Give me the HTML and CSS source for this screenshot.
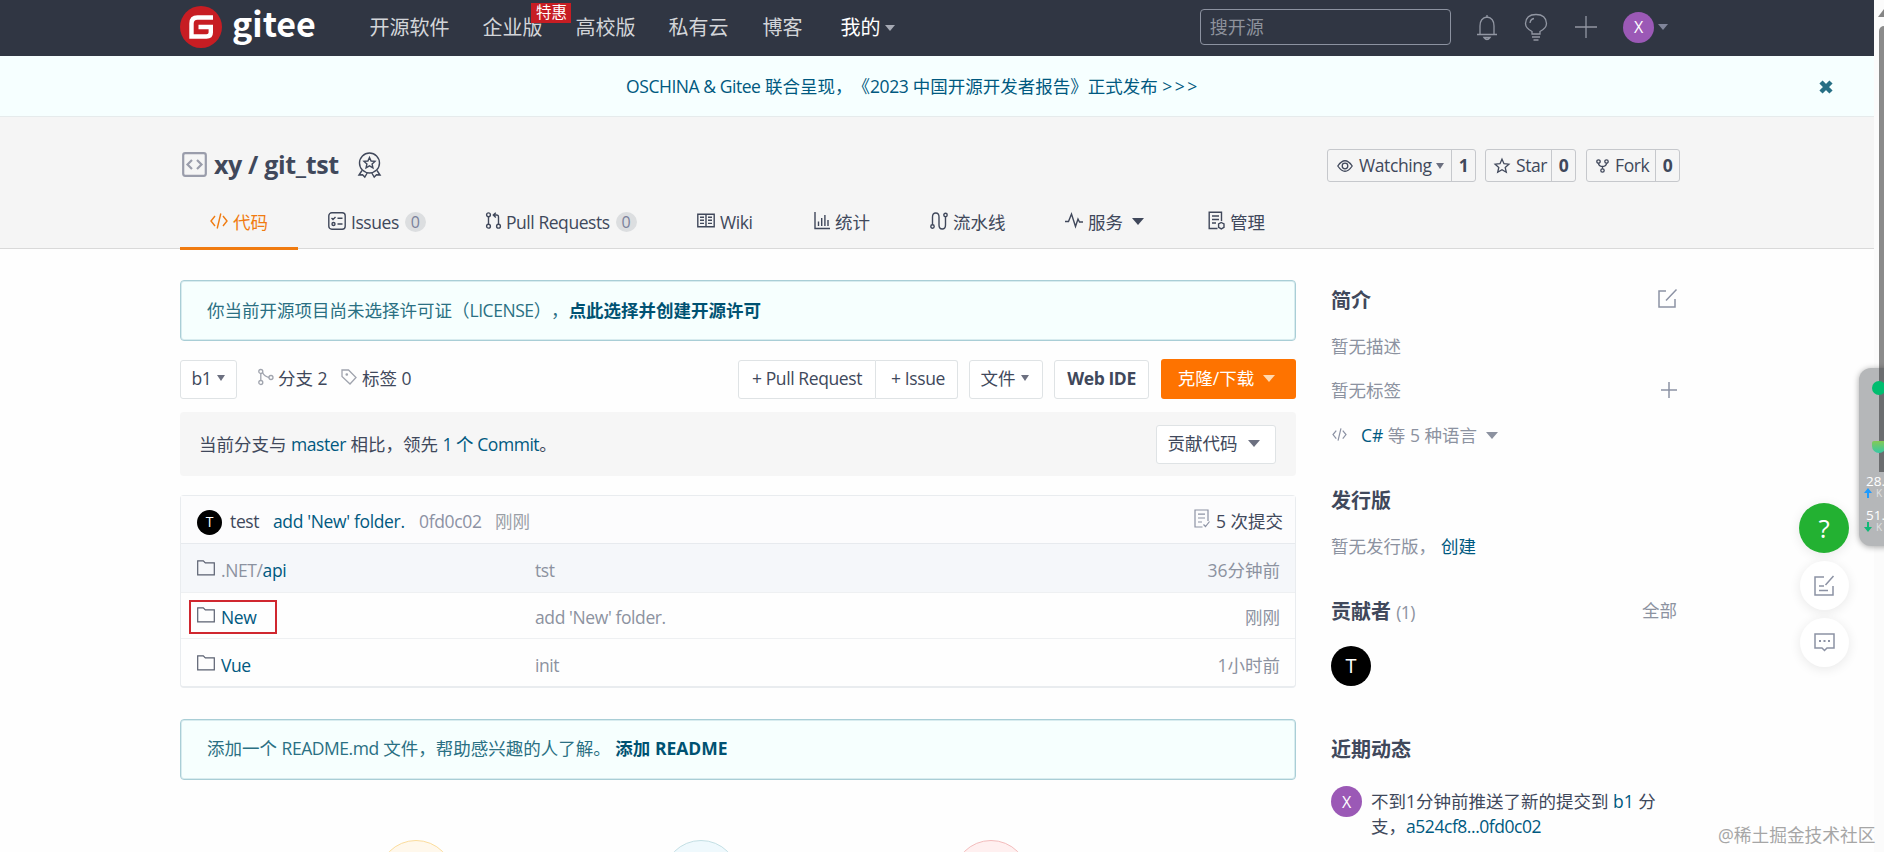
FILE: index.html
```html
<!DOCTYPE html>
<html lang="zh-CN">
<head>
<meta charset="utf-8">
<title>xy/git_tst</title>
<link rel="stylesheet" href="styles.css">
</head>
<body>
<svg class="defs" width="0" height="0">
  <symbol id="folder" viewBox="0 0 18 16"><path d="M.7 14.8V.8h5.6l2 2h9v12z"/></symbol>
  <symbol id="code" viewBox="0 0 18 16"><path d="M5 3L1 8l4 5M13 3L17 8l-4 5M10.800 .500L7.200 15.500"/></symbol>
</svg>
<div class="page">
  <header class="topbar">
    <a class="logo">
      <svg width="42" height="42" viewBox="0 0 42 42"><circle cx="21" cy="21" r="21" fill="#c71d23"/><path d="M33 11.500H17.500Q11.500 11.500 11.500 17.500V30.500H26.500Q30.800 30.500 30.800 26.500V21H18.500" fill="none" stroke="#fff" stroke-width="4.400"/></svg>
      <span class="logo-text">gitee</span>
    </a>
    <nav class="nav">
      <a class="n1">开源软件</a><a class="n2">企业版<b class="promo">特惠</b></a><a class="n3">高校版</a><a class="n4">私有云</a><a class="n5">博客</a><a class="n6">我的<i class="caret"></i></a>
    </nav>
    <div class="search">搜开源</div>
    <svg class="ic bell" width="22" height="27" viewBox="0 0 22 27"><path d="M1 20.500h20M4 20.500V12q0-8 7-9 7 1 7 9v8.500M11 3V1M8 23.500h6q-3 4-6 0z"/></svg>
    <svg class="ic bulb" width="24" height="28" viewBox="0 0 24 28"><path d="M8 21v-2.500Q1.500 15 1.500 10.500 2 1.500 12 1.500t10.500 9Q22.500 15 16 18.500V21zM8 24h8M9.500 27h5M6 10q.5-4 4-4.500"/></svg>
    <svg class="ic plus" width="22" height="22" viewBox="0 0 22 22"><path d="M0 11h22M11 0v22"/></svg>
    <span class="avatar me">X</span><i class="caret me-caret"></i>
  </header>

  <div class="banner">
    <a><span class="en">OSCHINA &amp; Gitee</span> 联合呈现，《<span class="en">2023</span> 中国开源开发者报告》正式发布 <span class="gt">&gt;&gt;&gt;</span></a>
    <svg class="close" width="14" height="14" viewBox="0 0 14 14"><path d="M2 2l10 10M12 2L2 12"/></svg>
  </div>

  <section class="project">
    <div class="title-row">
      <svg class="repo" width="25" height="25" viewBox="0 0 25 25"><rect x="1.200" y="1.200" width="22.600" height="22.600" rx="2"/><path d="M10 8l-4.500 4.500L10 17M15 8l4.500 4.500L15 17"/></svg>
      <h1>xy / git_tst</h1>
      <svg class="ln medal" width="23" height="26" viewBox="0 0 23 26"><circle cx="11.500" cy="11" r="10"/><path d="M11.500 5.500l1.600 3.500 3.900.4-2.900 2.600.8 3.800-3.400-2-3.400 2 .8-3.800L6 9.400l3.900-.4zM4 18.500l-3 4.500 3.500-.3L6.800 25l2.400-4M19 18.500l3 4.500-3.500-.3-2.300 2.300-2.400-4"/></svg>
      <div class="actions">
        <div class="act a1"><span><svg class="ln" width="16" height="14" viewBox="0 0 16 14"><path d="M.8 7Q8-3.500 15.200 7 8 17.500.8 7z"/><circle cx="8" cy="7" r="2.800"/></svg>Watching<i class="caret"></i></span><b>1</b></div>
        <div class="act a2"><span><svg class="ln" width="16" height="16" viewBox="0 0 16 16"><path d="M8 1.200l2 4.500 4.900.5-3.700 3.300 1.100 4.800L8 11.800l-4.300 2.500 1.100-4.800L1.100 6.200 6 5.700z"/></svg>Star</span><b>0</b></div>
        <div class="act a3"><span><svg class="ln" width="13" height="14" viewBox="0 0 13 14"><circle cx="2.500" cy="2.500" r="1.700"/><circle cx="10.500" cy="2.500" r="1.700"/><circle cx="6.500" cy="11.500" r="1.700"/><path d="M2.500 4.200q0 3 4 3.300 4-.3 4-3.300M6.500 7.500v2.300"/></svg>Fork</span><b>0</b></div>
      </div>
    </div>
    <nav class="tabs">
      <a class="t1"><svg width="18" height="16"><use href="#code"/></svg>代码</a>
      <a class="t2"><svg width="18" height="18" viewBox="0 0 18 18"><rect x=".8" y=".8" width="16.400" height="16.400" rx="3"/><path d="M3.500 6l1.500 1.500L7.500 5M9.500 6.200h5M9.500 12h5"/><circle cx="5.500" cy="12" r="1.500"/></svg><span class="en">Issues</span><b>0</b></a>
      <a class="t3"><svg width="15" height="17" viewBox="0 0 15 17"><circle cx="2.500" cy="2.800" r="1.900"/><circle cx="2.500" cy="14.200" r="1.900"/><circle cx="12.500" cy="14.200" r="1.900"/><path d="M2.500 4.700v7.600M12.500 12.300V5q0-2-2-2H7.500M9.800.800L7.300 3l2.500 2.400"/></svg><span class="en">Pull Requests</span><b>0</b></a>
      <a class="t4"><svg width="18" height="15" viewBox="0 0 18 15"><path d="M.8 1.200h16.400v12.600H.8zM9 1.200v12.600M3 4.200h4M3 7.300h4M3 10.400h4M11 4.200h4M11 7.300h4M11 10.400h4"/></svg><span class="en">Wiki</span></a>
      <a class="t5"><svg width="16" height="18" viewBox="0 0 16 18"><path d="M1 0v16.500h15M4.500 9.500V14M7.700 6v8M10.900 3v11M14 8v6"/></svg>统计</a>
      <a class="t6"><svg width="18" height="18" viewBox="0 0 18 18"><circle cx="2.500" cy="14.500" r="1.700"/><circle cx="15.500" cy="3" r="1.700"/><path d="M2.500 12.800V5q0-4 3.300-4 3.200 0 3.200 4v8q0 4 3.200 4 3.300 0 3.300-4V4.700"/></svg>流水线</a>
      <a class="t7"><svg width="18" height="15" viewBox="0 0 18 15"><path d="M0 8.500h3.500L6.500 1l4 12.500L13 6l1.500 3H18"/></svg>服务<i class="caret big"></i></a>
      <a class="t8"><svg width="17" height="19" viewBox="0 0 17 19"><path d="M9.500 17.500H1.200V1.200h12.300V10M4 5h7M4 8.500h7M4 12h4"/><path d="M13.300 11.500l2.700 1.500v3.400l-2.700 1.500-2.700-1.500V13z"/></svg>管理</a>
    </nav>
  </section>

  <div class="content">
    <main>
      <div class="alert">你当前开源项目尚未选择许可证（<span class="en">LICENSE</span>），<b>点此选择并创建开源许可</b></div>
      <div class="toolbar">
        <a class="btn b-branch"><span>b1</span><i class="caret"></i></a>
        <a class="stat s1"><svg width="16" height="16" viewBox="0 0 16 16"><circle cx="2.800" cy="2.500" r="2"/><circle cx="2.800" cy="13.500" r="2"/><circle cx="13" cy="8.500" r="2"/><path d="M2.800 4.500v7M4.500 3.500q2 4 6.500 5"/></svg>分支 2</a>
        <a class="stat s2"><svg width="16" height="16" viewBox="0 0 16 16"><path d="M1 1h6.500l7.500 7.500L9 15 1 7.500z"/><circle cx="5.800" cy="5.500" r=".7"/></svg>标签 0</a>
        <a class="btn b-pr"><span>+ Pull Request</span></a><a class="btn b-issue"><span>+ Issue</span></a>
        <a class="btn b-file">文件<i class="caret"></i></a>
        <a class="btn b-ide"><b>Web IDE</b></a>
        <a class="btn b-clone">克隆/下载<i class="caret big"></i></a>
      </div>
      <div class="compare">
        <span>当前分支与 <a class="en">master</a> 相比，领先 <a class="en">1 个 Commit</a>。</span>
        <a class="btn b-contrib">贡献代码<i class="caret big"></i></a>
      </div>
      <div class="files">
        <div class="commit"><span class="avatar t">T</span><span class="who">test</span><a class="msg">add 'New' folder.</a><span class="sha">0fd0c02</span><span class="now">刚刚</span>
          <span class="total"><svg width="16" height="19" viewBox="0 0 16 19"><path d="M8.500 18H1V1h13v11M4 5.200h7M4 9h7M4 13h4M9.500 15.500l2 2 4-5"/></svg>5 次提交</span></div>
        <div class="file hover"><svg width="18" height="16"><use href="#folder"/></svg><span class="name">.NET/<a>api</a></span><span class="desc">tst</span><span class="time">36分钟前</span></div>
        <div class="file r2"><svg width="18" height="16"><use href="#folder"/></svg><span class="name"><a>New</a></span><span class="desc">add 'New' folder.</span><span class="time">刚刚</span><i class="mark"></i></div>
        <div class="file r3"><svg width="18" height="16"><use href="#folder"/></svg><span class="name"><a>Vue</a></span><span class="desc">init</span><span class="time">1小时前</span></div>
      </div>
      <div class="alert readme">添加一个 <span class="en">README.md</span> 文件，帮助感兴趣的人了解。 <b>添加 <span class="en2">README</span></b></div>
      <div class="steps"><i class="c1"></i><i class="c2"></i><i class="c3"></i></div>
    </main>

    <aside>
      <div class="row h"><h2>简介</h2><svg class="ic" width="19" height="19" viewBox="0 0 19 19"><path d="M8 2H1v16h16v-8M18.500.5L8 11.500"/></svg></div>
      <div class="row d1">暂无描述</div>
      <div class="row d2">暂无标签<svg class="ic" width="16" height="16" viewBox="0 0 16 16"><path d="M0 8h16M8 0v16"/></svg></div>
      <div class="row d3"><svg class="ic cd" width="17" height="13" viewBox="0 1 18 14"><use href="#code"/></svg><span><a>C#</a> 等 5 种语言</span><i class="caret big"></i></div>
      <div class="row h rel"><h2>发行版</h2></div>
      <div class="row d4">暂无发行版， <a>创建</a></div>
      <div class="row h con"><h2>贡献者 <small>(1)</small></h2><span>全部</span></div>
      <span class="avatar big-t">T</span>
      <div class="row h act-h"><h2>近期动态</h2></div>
      <div class="event"><span class="avatar x">X</span><p>不到1分钟前推送了新的提交到 <a>b1</a> 分支，<a class="en">a524cf8...0fd0c02</a></p></div>
    </aside>
  </div>
</div>

<div class="scroll"><i class="up"></i><i class="thumb"></i></div>
<div class="floats">
  <span class="help">?</span>
  <span class="fb"><svg class="ic" width="21" height="21" viewBox="0 0 21 21"><path d="M10 2H1v18h18v-9M19.500 1l-8 9M5 11h5M5 15.500h9"/></svg></span>
  <span class="fb"><svg class="ic" width="21" height="19" viewBox="0 0 21 19"><path d="M1 1h19v14h-7l-2.500 2.500L8 15H1z"/><path class="dots" d="M5 8h2M9.500 8h2M14 8h2"/></svg></span>
</div>
<div class="meter">
  <i class="shade"></i><i class="g1"></i><i class="g2"></i>
  <div class="m1">28.</div><div class="k"><svg width="8" height="10" viewBox="0 0 8 10"><path d="M4 0l4 5H5v5H3V5H0z" fill="#1e9bff"/></svg>K</div>
  <div class="m1 m2">51.</div><div class="k"><svg width="8" height="10" viewBox="0 0 8 10"><path d="M4 10l4-5H5V0H3v5H0z" fill="#12b877"/></svg>K</div>
</div>
<div class="watermark">@稀土掘金技术社区</div>
</body>
</html>
```
FILE: styles.css
```css
* { box-sizing: border-box; }
body { margin: 0; width: 1884px; height: 852px; overflow: hidden; position: relative; background: #fefefe; color: #40485b;
  font: 17.5px/24px "Open Sans", "Noto Sans CJK SC", sans-serif; white-space: nowrap; text-spacing-trim: space-all; }
.defs { position: absolute; }
.defs symbol { overflow: visible; }
i { font-style: normal; }
svg { fill: none; stroke: currentColor; stroke-width: 1.4; flex: none; overflow: visible; }
.en { letter-spacing: -.45px; }
.page { width: 1874px; height: 852px; overflow: hidden; }
.ic { color: #8c92a4; stroke-width: 1.5; }
.caret { display: inline-block; flex: none; border: 4.5px solid transparent; border-top: 6px solid #6c7080; border-bottom: 0; }
.caret.big { border-width: 7px 6px 0; }
.avatar { display: flex; align-items: center; justify-content: center; border-radius: 50%; color: #fff; flex: none; }

.topbar { display: flex; align-items: center; height: 56px; background: #303643; padding: 0 206px 2px 180px; color: #d3d5d9; }
.logo { display: flex; align-items: center; width: 190px; color: #fff; }
.logo svg { stroke: none; }
.logo-text { font: bold 34px/50px "Noto Sans CJK SC", sans-serif; margin: -8px 0 0 10px; }
.nav { display: flex; font-size: 20px; width: 833px; padding-top: 2px; }
.nav a { position: relative; }
.n1 { width: 113px; } .n2 { width: 93px; } .n3 { width: 93px; } .n4 { width: 94px; } .n5 { width: 78px; }
.n6 { color: #fff; display: flex; align-items: center; gap: 5px; }
.nav .caret, .me-caret { border-width: 6px 5px 0; border-top-color: #a5a9b3; }
.promo { position: absolute; left: 49px; top: -13px; width: 40px; height: 20px; background: #c71d23; color: #fff; font-weight: 400; font-size: 15.5px; line-height: 19px; text-align: center; z-index: 2; }
.search { width: 252px; height: 36px; border: 1px solid #8c92a0; border-radius: 4px; padding-left: 9px; font-size: 18px; line-height: 35px; color: #8e929c; margin-right: 25px; }
.topbar > .ic { stroke-width: 1.3; color: #9297a3; }
.bulb { margin-left: 26px; }
.plus { margin-left: 27px; }
.me { width: 31px; height: 31px; background: #9b59b6; font-size: 16px; margin-left: 26px; }
.me-caret { margin-left: 4px; border-top-color: #80859a; }

.banner { position: relative; height: 61px; background: #f6ffff; border-bottom: 1px solid #e6ebec; color: #005980; text-align: center; line-height: 61px; padding-right: 48px; }
.banner .close { position: absolute; right: 41px; top: 24px; color: #266f85; stroke-width: 4.5; }
.gt { letter-spacing: 2.5px; }

.project { height: 132px; background: #f5f5f5; border-bottom: 1px solid #d9d9d9; padding: 32px 194px 0 180px; }
.title-row { display: flex; align-items: center; height: 33px; }
.repo { color: #9a9dab; stroke-width: 2.2; margin: -2px 0 0 2px; }
h1 { margin: -4px 0 0; font-size: 25px; line-height: 30px; width: 151px; padding-left: 7px; letter-spacing: -.35px; }
.medal { margin-top: -1px; }
.actions { display: flex; margin-left: auto; }
.act { display: flex; height: 33px; border: 1px solid #c6c8cc; border-radius: 3px; line-height: 31px; letter-spacing: -.4px; }
.act span { display: flex; align-items: center; gap: 6px; padding-left: 9px; flex: 1; }
.act b { width: 24px; text-align: center; border-left: 1px solid #c6c8cc; }
.act .caret { margin-left: -2px; }
.act svg { stroke-width: 1.3; }
.a1 { width: 149px; } .a2 { width: 91px; margin: 0 10px 0 9px; } .a3 { width: 94px; }
.a2 span { padding-left: 8px; }
.tabs { display: flex; margin-top: 14px; height: 54px; position: relative; }
.tabs a { display: flex; align-items: center; padding-left: 30px; padding-bottom: 3px; }
.tabs svg { margin-right: 5px; margin-top: -2px; }
.tabs b { width: 21px; height: 20px; line-height: 20px; border-radius: 50%; background: #dcdee0; color: #7a819b; font-weight: 400; font-size: 16px; text-align: center; margin-left: 6px; }
.tabs .t1 { width: 118px; color: #f07b10; border-bottom: 3px solid #f07b10; padding-bottom: 0; }
.t2 { width: 158px; } .t3 { width: 211px; } .t4 { width: 117px; } .t5 { width: 116px; } .t6 { width: 135px; } .t7 { width: 143px; }
.tabs .caret { margin-left: 9px; border-top-color: #40485b; }

.content { display: flex; gap: 35px; padding: 31px 194px 0 180px; height: 603px; overflow: hidden; }
main { width: 1116px; flex: none; }
.alert { height: 61px; border: 1px solid #a9ced6; border-radius: 4px; background: #f6fffe; color: #2a7083; padding-left: 26px; line-height: 58px; box-shadow: inset 0 0 0 1px #d8ecef; }
.alert b { color: #005272; }
.toolbar { display: flex; align-items: center; height: 40px; margin-top: 18px; }
.btn { display: flex; align-items: center; justify-content: center; height: 39px; border: 1px solid #dfe3e5; border-radius: 3px; background: #fff; letter-spacing: -.4px; padding-bottom: 2px; }
.b-branch { width: 57px; gap: 6px; }
.stat { display: flex; align-items: center; gap: 5px; padding-bottom: 2px; }
.stat svg { color: #a0a4ae; stroke-width: 1.3; margin-top: -2px; }
.s1 { margin-left: 21px; width: 83px; } .s2 { width: 397px; }
.s1 svg { margin-right: -1px; }
.b-pr { width: 138px; border-radius: 3px 0 0 3px; }
.b-issue { width: 82px; border-left: 0; border-radius: 0 3px 3px 0; margin-right: 11px; padding-left: 3px; }
.b-file { width: 74px; gap: 5px; letter-spacing: 0; padding-right: 3px; }
.b-ide { width: 95px; margin: 0 12px 0 11px; }
.b-clone { width: 135px; height: 40px; border: 0; background: #fe7300; color: #fff; gap: 9px; letter-spacing: 0; padding-right: 4px; }
.b-clone .caret { border-top-color: #ffd9b0; }
.compare { height: 64px; background: #f6f6f6; border-radius: 4px; margin-top: 13px; display: flex; align-items: center; justify-content: space-between; padding: 0 20px 0 19px; }
.b-contrib { width: 120px; gap: 10px; letter-spacing: 0; padding-right: 5px; }
.compare > span { margin-top: -1px; }
.compare a.en, aside a, .file a, .msg { color: #005980; }
.files { margin-top: 19px; height: 193px; border: 1px solid #e9ecef; border-bottom-width: 2px; border-radius: 4px; }
.commit { display: flex; height: 48px; align-items: center; background: #fcfcfd; border-bottom: 1px solid #e7eaee; padding: 0 12px 0 16px; letter-spacing: -.35px; }
.t { width: 25px; height: 25px; background: #000; font-size: 14px; margin-top: 5px; }
.who { width: 43px; margin-left: 8px; padding-top: 2px; }
.msg { width: 146px; padding-top: 2px; }
.sha { width: 76px; color: #8c92a4; padding-top: 2px; }
.now { color: #9a9fa6; padding-top: 2px; letter-spacing: 0; }
.total { display: flex; align-items: center; margin-left: auto; gap: 6px; padding-top: 2px; letter-spacing: 0; }
.total svg { color: #8c92a4; margin-top: -4px; stroke-width: 1.2; }
.file { position: relative; display: flex; align-items: center; height: 48px; border-bottom: 1px solid #eef0f2; padding: 2px 15px 0 16px; color: #8c92a0; letter-spacing: -.4px; }
.file > svg { color: #5a6070; margin-top: -3px; stroke-width: 1.2; }
.file.hover { background: #f5f7fa; height: 49px; padding-top: 3px; }
.file.r2 { height: 46px; padding-top: 2px; }
.file.r3 { border: 0; height: 47px; padding-top: 4px; }
.name { width: 314px; margin-left: 6px; }
.time { margin-left: auto; letter-spacing: 0; }
.mark { position: absolute; left: 8px; top: 7px; width: 88px; height: 34px; border: 2px solid #d0272f; }
.readme { margin-top: 31px; line-height: 57px; }
.steps { display: flex; margin-top: 60px; padding-left: 198px; }
.steps i { width: 76px; height: 76px; border: 1px solid #fbdc9c; background: #fff8ec; border-radius: 50%; flex: none; }
.steps .c2 { margin: 0 214px 0 209px; border-color: #c3dfe4; background: #eff9fd; }
.steps .c3 { border-color: #f3bcbc; background: #fff0f0; }

aside { width: 346px; padding-top: 6px; color: #8c92a0; }
.row { display: flex; align-items: center; height: 30px; }
h2 { margin: 0; font-size: 20px; line-height: 30px; color: #40485b; }
h2 small { font-weight: 400; font-size: 17.5px; color: #8c92a0; letter-spacing: -.5px; }
.h { justify-content: space-between; }
.h .ic { margin-top: -6px; }
.d1 { margin-top: 15px; }
.d2 { margin-top: 14px; justify-content: space-between; }
.d3 { margin-top: 15px; }
.d3 span { margin: 0 9px 0 13px; }
.d3 .caret { border-top-color: #8c92a0; }
.rel { margin-top: 36px; }
.d4 { margin-top: 15px; gap: 5px; }
.con { margin-top: 36px; }
.con span { margin-top: -4px; }
.big-t { width: 40px; height: 40px; background: #000; font-size: 20px; margin-top: 19px; }
.act-h { margin-top: 49px; }
.event { display: flex; margin-top: 21px; color: #40485b; }
.x { width: 31px; height: 31px; background: #9b59b6; font-size: 16px; }
.event p { margin: 3px 0 0 9px; width: 290px; line-height: 25px; white-space: normal; }

.scroll { position: absolute; right: 0; top: 0; width: 10px; height: 852px; background: #fbfbfb; }
.up { position: absolute; left: 4px; top: 9px; border: 6px solid transparent; border-bottom: 8px solid #858585; border-top: 0; }
.thumb { position: absolute; left: 5px; top: 26px; width: 10px; height: 446px; background: #8b8b8b; border-radius: 5px; }
.floats { position: absolute; left: 1799px; top: 503px; width: 50px; display: flex; flex-direction: column; align-items: center; gap: 8px; }
.floats span { display: flex; align-items: center; justify-content: center; width: 49px; height: 49px; border-radius: 50%; background: #fff; box-shadow: 0 2px 12px rgba(0,0,0,.09); }
.floats .help { width: 50px; height: 50px; background: #23b132; color: #fff; font-size: 26px; font-weight: 500; }
.dots { stroke-width: 2; }
.meter { position: absolute; left: 1859px; top: 368px; width: 40px; height: 178px; border-radius: 12px; background: #b5b7b9; box-shadow: 0 1px 6px rgba(0,0,0,.35); padding: 104px 0 0 7px; color: #fff; font: 13.5px/18px "Open Sans", sans-serif; }
.shade { position: absolute; left: 20px; top: 0; width: 5px; height: 104px; background: #6b6d6f; }
.g1, .g2 { position: absolute; left: 13px; top: 13px; width: 14px; height: 14px; border-radius: 50%; background: #00bd6f; }
.g2 { top: 73px; height: 12px; border-radius: 2px 2px 7px 7px; background: linear-gradient(#84c955, #35c9a6); }
.k { display: flex; align-items: center; gap: 4px; font-size: 10px; line-height: 10px; height: 10px; color: #e0e2e3; margin: -2px 0 0 -2px; }
.k svg { stroke: none; }
.m2 { margin-top: 8px; }
.watermark { position: absolute; left: 1718px; top: 823px; color: #a6a6a6; font-size: 17.7px; }
```
